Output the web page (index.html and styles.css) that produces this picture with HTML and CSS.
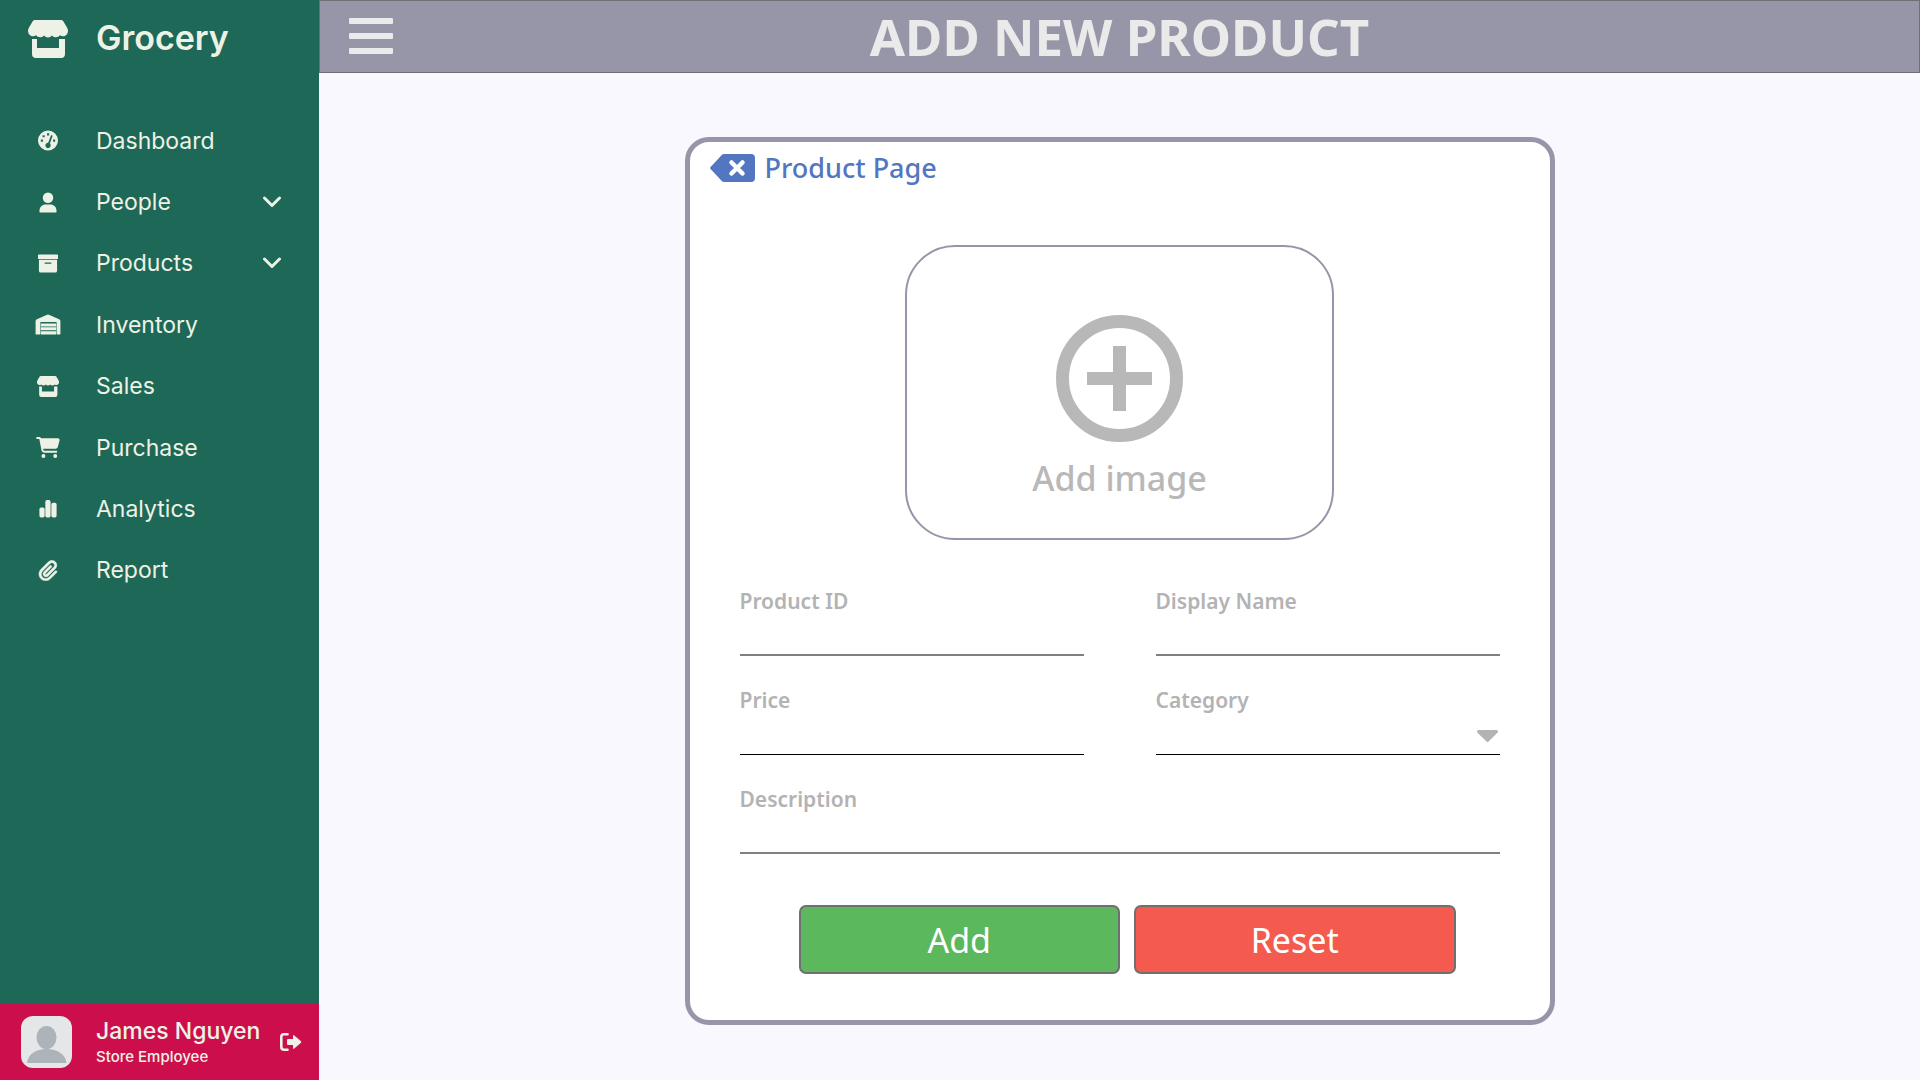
FILE: index.html
```html
<!DOCTYPE html>
<html lang="en">
<head>
<meta charset="utf-8">
<meta name="viewport" content="width=device-width, initial-scale=1">
<title>Grocery - Add New Product</title>
<link rel="stylesheet" href="styles.css">
</head>
<body>
<svg class="sprite" aria-hidden="true">
  <symbol id="shop" viewBox="0 0 40 38">
    <path d="M7 0h26q1.500 0 2.300 1.200l3.700 6.300q1 1.800 1 3.700a5 5 0 0 1-8 4 5 5 0 0 1-8 0.200 5 5 0 0 1-8 0 5 5 0 0 1-8-0.200 5 5 0 0 1-8-4q0-1.900 1-3.700L4.700 1.200Q5.500 0 7 0z"/>
    <path d="M4 19h5v9h22v-9h6v15q0 4-4 4H8q-4 0-4-4z"/>
  </symbol>
</svg>
<aside class="sidebar">
  <a class="brand" href="#">
    <svg class="brand-icon"><use href="#shop"/></svg>
    <span class="brand-name">Grocery</span>
  </a>
  <nav class="menu" aria-label="Main">
    <a class="menu-item" href="#">
      <svg class="menu-icon" viewBox="0 0 26 22"><path fill-rule="evenodd" d="M13 .5a10.500 10.500 0 1 0 0 21 10.500 10.500 0 1 0 0-21zM12 3.500h2.200v2.200H12zM7.300 5.400h2.200v2.200H7.300zM5.500 10h2.200v2.200H5.500zM18.300 10h2.200v2.200h-2.200zM16.300 5.200l1.600.8-2.900 8.200a2.800 2.800 0 1 1-1.800-.8z"/></svg>
      <span>Dashboard</span>
    </a>
    <button class="menu-item" type="button" aria-expanded="false">
      <svg class="menu-icon" viewBox="0 0 26 22"><circle cx="13" cy="6" r="5.500"/><path d="M4 20.500C4 15.500 7 13 10.500 13h5c3.500 0 6.500 2.500 6.500 7.500q0 1-1 1H5q-1 0-1-1z"/></svg>
      <span>People</span>
      <svg class="chevron" viewBox="0 0 18 12"><path d="M1.500 2 9 9.500 16.500 2"/></svg>
    </button>
    <button class="menu-item" type="button" aria-expanded="false">
      <svg class="menu-icon" viewBox="0 0 26 22"><path d="M2.500 2.500q0-1 1-1h19q1 0 1 1v3.700h-21zM3.500 7.200h19V18.500q0 2-2 2h-15q-2 0-2-2zm6 2.800v1.300h7V10z" fill-rule="evenodd"/></svg>
      <span>Products</span>
      <svg class="chevron" viewBox="0 0 18 12"><path d="M1.500 2 9 9.500 16.500 2"/></svg>
    </button>
    <a class="menu-item" href="#">
      <svg class="menu-icon" viewBox="0 0 26 22"><path d="M0 21V7.500Q0 6 1.400 5.400L12 .900q1-.4 2 0l10.600 4.500Q26 6 26 7.500V21q0 .5-.5.500h-3q-.5 0-.5-.5V8.500H5V21q0 .5-.5.500h-4Q0 21.500 0 21z"/><path d="M5.500 10h16v3h-16zM5.500 14h16v3h-16zM5.500 18h16v3.500h-16z"/></svg>
      <span>Inventory</span>
    </a>
    <a class="menu-item" href="#">
      <svg class="menu-icon"><use href="#shop"/></svg>
      <span>Sales</span>
    </a>
    <a class="menu-item" href="#">
      <svg class="menu-icon" viewBox="0 0 576 512"><path d="M0 24C0 10.700 10.700 0 24 0H69.500c22 0 41.500 12.800 50.600 32h411c26.300 0 45.500 25 38.600 50.400l-41 152.300c-8.500 31.400-37 53.300-69.500 53.300H170.700l5.400 28.500c2.200 11.300 12.100 19.500 23.600 19.500H488c13.300 0 24 10.700 24 24s-10.700 24-24 24H199.700c-34.600 0-64.300-24.600-70.700-58.500L77.400 54.500c-.7-3.800-4-6.500-7.900-6.500H24C10.700 48 0 37.300 0 24zM128 464a48 48 0 1 1 96 0 48 48 0 1 1-96 0zm336-48a48 48 0 1 1 0 96 48 48 0 1 1 0-96z"/></svg>
      <span>Purchase</span>
    </a>
    <a class="menu-item" href="#">
      <svg class="menu-icon" viewBox="0 0 26 22"><rect x="4" y="10" width="5.500" height="10.500" rx="1.800"/><rect x="10.200" y="2" width="5.500" height="18.500" rx="1.800"/><rect x="16.500" y="5" width="5.500" height="15.500" rx="1.800"/></svg>
      <span>Analytics</span>
    </a>
    <a class="menu-item" href="#">
      <svg class="menu-icon menu-icon-bold" viewBox="0 0 448 512"><path d="M364.200 83.800c-24.400-24.400-64-24.400-88.400 0l-184 184c-42.100 42.100-42.100 110.300 0 152.400s110.300 42.100 152.400 0l152-152c10.900-10.900 28.700-10.900 39.600 0s10.900 28.700 0 39.600l-152 152c-64 64-167.600 64-231.600 0s-64-167.600 0-231.600l184-184c46.300-46.300 121.300-46.300 167.600 0s46.300 121.300 0 167.600l-176 176c-28.600 28.600-75 28.600-103.600 0s-28.600-75 0-103.600l144-144c10.900-10.900 28.700-10.900 39.600 0s10.900 28.700 0 39.600l-144 144c-6.700 6.700-6.700 17.700 0 24.400s17.700 6.700 24.400 0l176-176c24.400-24.400 24.400-64 0-88.400z"/></svg>
      <span>Report</span>
    </a>
  </nav>
  <footer class="profile">
    <svg class="avatar" viewBox="0 0 51 52" role="img" aria-label="Profile picture"><rect width="51" height="52" rx="12" fill="#e4e6e8"/><ellipse cx="25.500" cy="21.500" rx="10" ry="11.500" fill="#adb3b8"/><path d="M6 47c1-9 9-14 19.500-14S44.500 38 45.500 47z" fill="#adb3b8"/></svg>
    <div class="profile-text">
      <div class="profile-name">James Nguyen</div>
      <div class="profile-role">Store Employee</div>
    </div>
    <button class="logout" type="button" aria-label="Log out">
      <svg viewBox="0 0 22 18"><path d="M7.500 1.300H4Q1.300 1.300 1.300 4v10q0 2.700 2.700 2.700h3.500" fill="none" stroke="currentColor" stroke-width="2.600" stroke-linecap="round"/><path d="M7 7q0-1 1-1h5V3.200q0-1.800 1.300-.7l6.700 5.700q.8.800 0 1.600l-6.700 5.700q-1.300 1.100-1.300-.7V12H8q-1 0-1-1z"/></svg>
    </button>
  </footer>
</aside>
<div class="page">
  <header class="topbar">
    <button class="menu-toggle" type="button" aria-label="Toggle menu">
      <svg viewBox="0 0 44 36"><rect width="44" height="6" rx="1"/><rect y="15" width="44" height="6" rx="1"/><rect y="30" width="44" height="6" rx="1"/></svg>
    </button>
    <h1 class="title">ADD NEW PRODUCT</h1>
  </header>
  <main class="content">
    <form class="card">
      <a class="back" href="#">
        <svg class="back-icon" viewBox="0 0 45 28"><path d="M14 0h27q4 0 4 4v20q0 4-4 4H14q-1.200 0-2-.8L.6 15q-1-1 0-2L12 .800Q12.800 0 14 0z"/><path d="M21.500 8.500 32.500 19.500M32.500 8.500 21.500 19.500" stroke="#fff" stroke-width="4.500" stroke-linecap="round"/></svg>
        <span>Product Page</span>
      </a>
      <button class="add-image" type="button">
        <svg class="add-icon" viewBox="0 0 127 127"><circle cx="63.500" cy="63.500" r="57" /><path d="M63.500 31v65M31 63.500h65"/></svg>
        <span>Add image</span>
      </button>
      <div class="fields">
        <div class="field">
          <label for="product-id">Product ID</label>
          <input id="product-id" type="text">
        </div>
        <div class="field">
          <label for="display-name">Display Name</label>
          <input id="display-name" type="text">
        </div>
        <div class="field field-thin">
          <label for="price">Price</label>
          <input id="price" type="text">
        </div>
        <div class="field field-thin">
          <label for="category">Category</label>
          <select id="category"><option value=""></option></select>
          <svg class="caret" viewBox="0 0 21 12"><path d="M1.500 0h18q1.500 0 1.500 1.500 0 .7-.5 1.200l-9 8.800q-1 1-2 0l-9-8.800Q0 2.200 0 1.500 0 0 1.500 0z"/></svg>
        </div>
        <div class="field field-wide">
          <label for="description">Description</label>
          <input id="description" type="text">
        </div>
      </div>
      <div class="actions">
        <button class="btn btn-add" type="submit">Add</button>
        <button class="btn btn-reset" type="reset">Reset</button>
      </div>
    </form>
  </main>
</div>
</body>
</html>
```
FILE: styles.css
```css
* { box-sizing: border-box; }
body {
  margin: 0;
  min-height: 100vh;
  display: grid;
  grid-template-columns: 319px 1fr;
  background: #f9f8ff;
  font-family: "Noto Sans", "Open Sans", sans-serif;
}
button, input, select { font: inherit; color: inherit; }
button { border: 0; background: none; padding: 0; cursor: pointer; }
a { color: inherit; text-decoration: none; }
svg { display: block; fill: currentColor; }
.sprite { position: absolute; width: 0; height: 0; }

.sidebar {
  display: flex;
  flex-direction: column;
  background: #1d6857;
  color: #eef2e6;
  font-family: Inter, sans-serif;
}
.brand { display: flex; align-items: center; height: 74px; padding-left: 28px; gap: 28px; }
.brand-icon { width: 40px; height: 38px; margin-top: 4px; }
.brand-name { font-size: 34px; font-weight: 600; }
.menu { display: grid; grid-auto-rows: 1fr; min-height: 491px; margin-top: 36px; }
.menu-item {
  display: flex;
  align-items: center;
  gap: 35px;
  padding: 0 38px 0 35px;
  font-size: 23px;
  text-align: left;
}
.menu-icon { width: 26px; height: 21px; }
.menu-icon-bold { stroke: currentColor; stroke-width: 12; }
.chevron {
  width: 18px;
  height: 12px;
  margin-left: auto;
  fill: none;
  stroke: currentColor;
  stroke-width: 3;
  stroke-linecap: round;
  stroke-linejoin: round;
}
.profile {
  display: flex;
  align-items: center;
  height: 77px;
  margin-top: auto;
  padding: 0 17px 0 21px;
  background: #cc0f4c;
}
.avatar { width: 51px; height: 52px; margin-right: 24px; }
.profile-text { font-weight: 500; white-space: nowrap; }
.profile-name { font-size: 23px; line-height: 30px; }
.profile-role { font-size: 15px; line-height: 22px; }
.logout { margin-left: auto; }
.logout svg { width: 22px; height: 18px; }

.topbar {
  display: grid;
  grid-template-columns: 1fr auto 1fr;
  align-items: center;
  height: 73px;
  padding: 0 29px 2px;
  border: 1px solid #707070;
  background: #9795a8;
  color: #eaeaea;
}
.menu-toggle { justify-self: start; }
.menu-toggle svg { width: 44px; height: 36px; }
.title { margin: 0; font-size: 51px; line-height: 68px; font-weight: 700; }

.content { padding: 64px 24px 55px; }
.card {
  display: flex;
  flex-direction: column;
  max-width: 870px;
  margin: 0 auto;
  padding: 6px 50px 46px;
  border: 5px solid #9795a8;
  border-radius: 24px;
  background: #fff;
}
.back {
  display: flex;
  align-items: center;
  align-self: flex-start;
  gap: 10px;
  margin-left: -30px;
  color: #5376c0;
  font-size: 27px;
  line-height: 40px;
  font-weight: 500;
}
.back-icon { width: 45px; height: 28px; }
.add-image {
  display: flex;
  flex-direction: column;
  align-items: center;
  align-self: center;
  width: 100%;
  max-width: 429px;
  height: 295px;
  margin-top: 57px;
  padding-top: 68px;
  border: 2px solid #9795a8;
  border-radius: 50px;
  color: #b8b8b8;
  font-size: 34px;
  line-height: 48px;
  font-weight: 500;
}
.add-icon {
  width: 127px;
  height: 127px;
  margin-bottom: 12px;
  fill: none;
  stroke: currentColor;
  stroke-width: 13;
}
.fields {
  display: grid;
  grid-template-columns: 1fr 1fr;
  gap: 30px 72px;
  margin-top: 47px;
}
.field { position: relative; display: flex; flex-direction: column; }
.field label { color: #b3b3b3; font-size: 21px; line-height: 28px; font-weight: 600; }
.field input, .field select {
  width: 100%;
  height: 41px;
  padding: 0;
  border: 0;
  border-bottom: 2px solid #808080;
  border-radius: 0;
  background: none;
  color: #333;
  font-size: 20px;
  appearance: none;
}
.field.field-thin input, .field.field-thin select { border-bottom: 1px solid #000; }
.field-wide { grid-column: 1 / -1; }
.caret {
  position: absolute;
  right: 2px;
  bottom: 13px;
  width: 21px;
  height: 12px;
  color: #b3b3b3;
  pointer-events: none;
}
.actions { display: flex; gap: 14px; margin-top: 51px; padding: 0 44px 0 59px; }
.btn {
  flex: 1;
  height: 69px;
  border: 2px solid #707070;
  border-radius: 7px;
  color: #fff;
  font-size: 34px;
}
.btn-add { background: #5cb85c; }
.btn-reset { background: #f55a4e; }
```
